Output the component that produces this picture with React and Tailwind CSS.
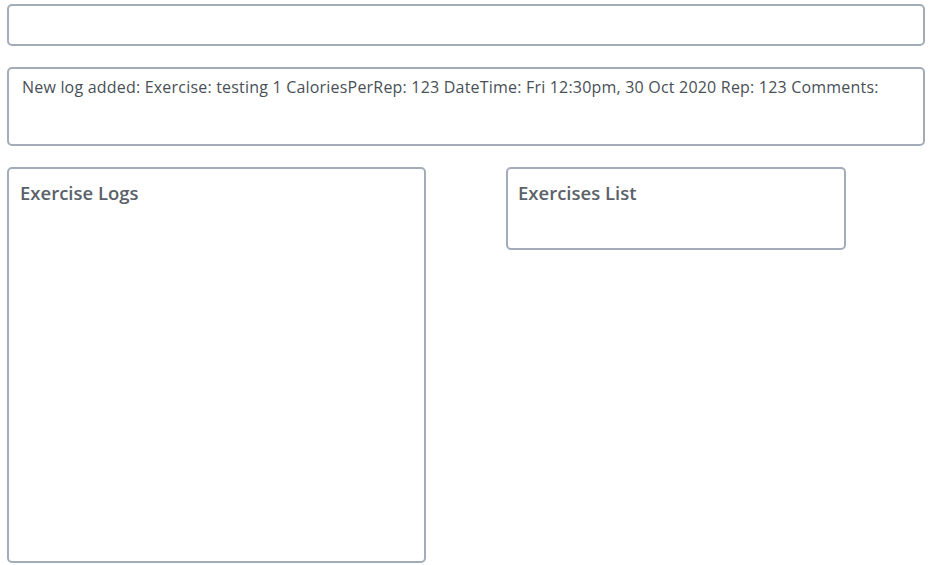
import React from 'react';

const box = "border-2 border-[#a3adb9] rounded-[5px] bg-white";

const App = () => {
  return (
    <div className="min-h-[565px] bg-white pt-[4px] px-[7px] text-[#495057]" style={{ fontFamily: '"Open Sans", "Noto Sans", sans-serif' }}>
      {/* top input-ish bar */}
      <div className={`${box} h-[42px] w-[918px]`}></div>

      {/* status message */}
      <div className={`${box} mt-[21px] h-[79px] w-[918px] px-[13px] pt-[7px]`}>
        <p className="text-[16px] leading-[22px] tracking-[0.2px]">
          New log added: Exercise: testing 1 CaloriesPerRep: 123 DateTime: Fri 12:30pm, 30 Oct 2020 Rep: 123 Comments:
        </p>
      </div>

      <div className="mt-[21px] flex items-start">
        <div className={`${box} h-[396px] w-[419px] px-[11px] pt-[11px]`}>
          <h2 className="text-[18.5px] font-semibold leading-[26px] text-[#5a6169]">Exercise Logs</h2>
        </div>
        <div className={`${box} ml-[80px] h-[83px] w-[340px] px-[10px] pt-[11px]`}>
          <h2 className="text-[18.5px] font-semibold leading-[26px] text-[#5a6169]">Exercises List</h2>
        </div>
      </div>
    </div>
  );
};

export default App;
